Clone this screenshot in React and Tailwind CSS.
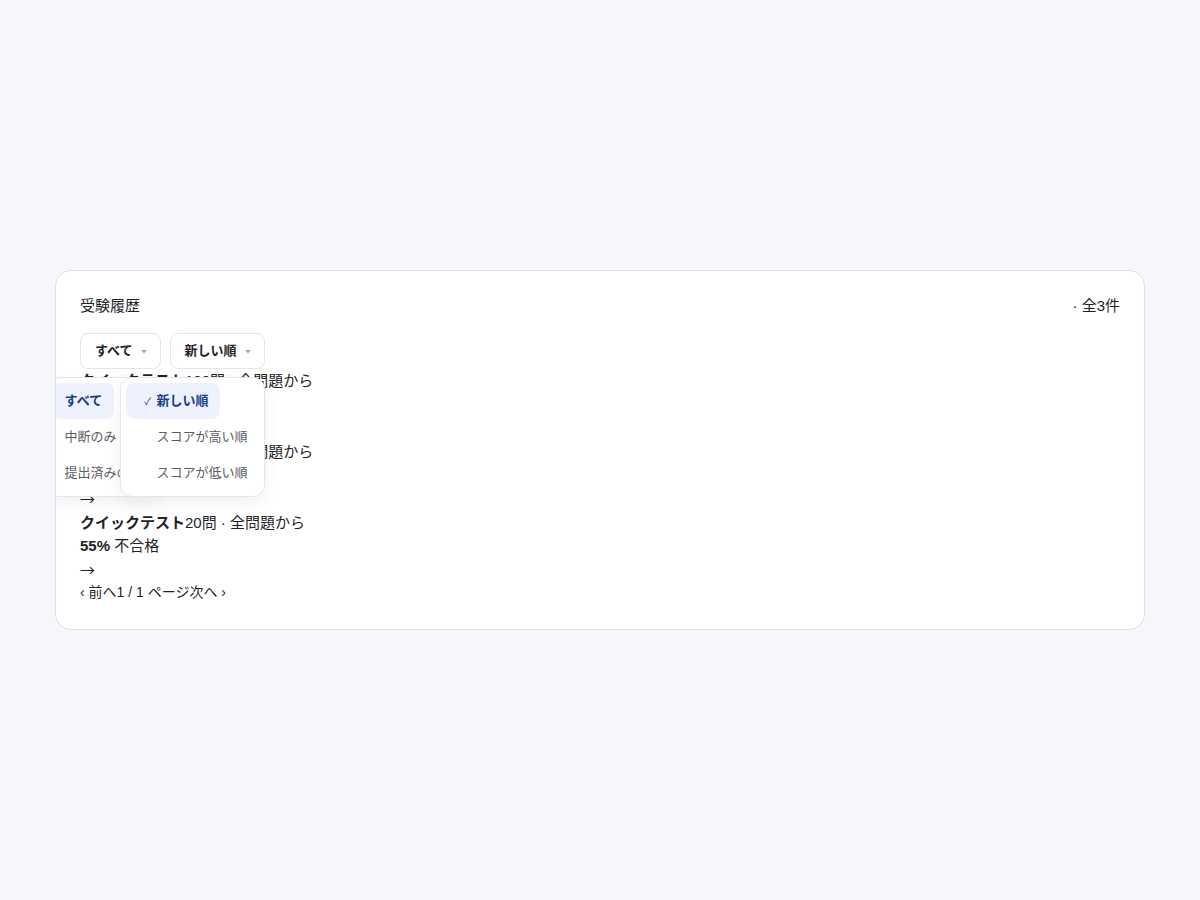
import { useState } from 'react';

const statusOptions = [
  { value: 'all', label: 'すべて' },
  { value: 'paused', label: '中断のみ' },
  { value: 'submitted', label: '提出済みのみ' },
];

const sortOptions = [
  { value: 'newest', label: '新しい順' },
  { value: 'score_desc', label: 'スコアが高い順' },
  { value: 'score_asc', label: 'スコアが低い順' },
];

const attempts = [
  { id: 1, title: 'クイックテスト', detail: '100問 · 全問題から', score: 72, result: '合格' },
  { id: 2, title: 'クイックテスト', detail: '100問 · 全問題から', score: 64, result: '不合格' },
  { id: 3, title: 'クイックテスト', detail: '20問 · 全問題から', score: 55, result: '不合格' },
];

function FilterMenu({ options, value, onChange, showCheck }) {
  const current = options.find((o) => o.value === value);
  return (
    <div className="relative">
      <button className="flex items-center gap-2 h-9 pl-[14px] pr-[13px] rounded-lg border border-[#e2e5eb] bg-white text-[13px] font-bold text-[#1f2328]">
        {current.label}
        <svg width="6" height="4" viewBox="0 0 6 4" className="mt-[1px]">
          <path d="M0 0h6L3 3.5z" fill="#a8adb5" />
        </svg>
      </button>
      <div className="absolute right-0 top-[44px] z-10 flex flex-col items-start p-[5px] bg-white border border-[#e2e5eb] rounded-xl shadow-[0_6px_16px_rgba(20,30,50,0.06)]">
        {options.map((o) => {
          const active = o.value === value;
          return (
            <button
              key={o.value}
              onClick={() => onChange(o.value)}
              className={
                active
                  ? 'flex items-center h-9 rounded-lg bg-[#edf2fc] text-[#1e3a8a] font-bold text-[13px] whitespace-nowrap ' + (showCheck ? 'pl-[13px] pr-[11px]' : 'px-3')
                  : 'flex items-center h-9 rounded-lg text-[#5b6068] text-[13px] whitespace-nowrap ' + (showCheck ? 'pl-[31px] pr-[11px]' : 'px-3')
              }
            >
              {showCheck && active && <span className="w-[18px] text-[10px] font-normal">✓</span>}
              {o.label}
            </button>
          );
        })}
      </div>
    </div>
  );
}

export default function App() {
  const [status, setStatus] = useState('all');
  const [sort, setSort] = useState('newest');

  return (
    <div
      className="min-h-[900px] bg-[#f6f7fb] flex items-center justify-center text-[#1f2328]"
      style={{ fontFamily: '"Liberation Sans", "Noto Sans CJK JP", sans-serif' }}
    >
      <div className="w-[1090px] h-[360px] bg-white border border-[#dde1e7] rounded-2xl overflow-hidden px-6 py-6">
        <div className="flex justify-between items-center text-[15px] leading-[22px]">
          <span>受験履歴</span>
          <span>· 全3件</span>
        </div>
        <div className="flex gap-[9px] mt-4">
          <FilterMenu options={statusOptions} value={status} onChange={setStatus} />
          <FilterMenu options={sortOptions} value={sort} onChange={setSort} showCheck />
        </div>
        <div className="text-[15px] leading-[23.6px]">
          {attempts.map((a) => (
            <div key={a.id}>
              <div>
                <span className="font-bold">{a.title}</span>
                {a.detail}
              </div>
              <div>
                <span className="font-bold">{a.score}%</span> {a.result}
              </div>
              <div className="font-['Noto_Sans_CJK_JP',sans-serif]">→</div>
            </div>
          ))}
          <div className="text-[14px]">‹ 前へ1 / 1 ページ次へ ›</div>
        </div>
      </div>
    </div>
  );
}
